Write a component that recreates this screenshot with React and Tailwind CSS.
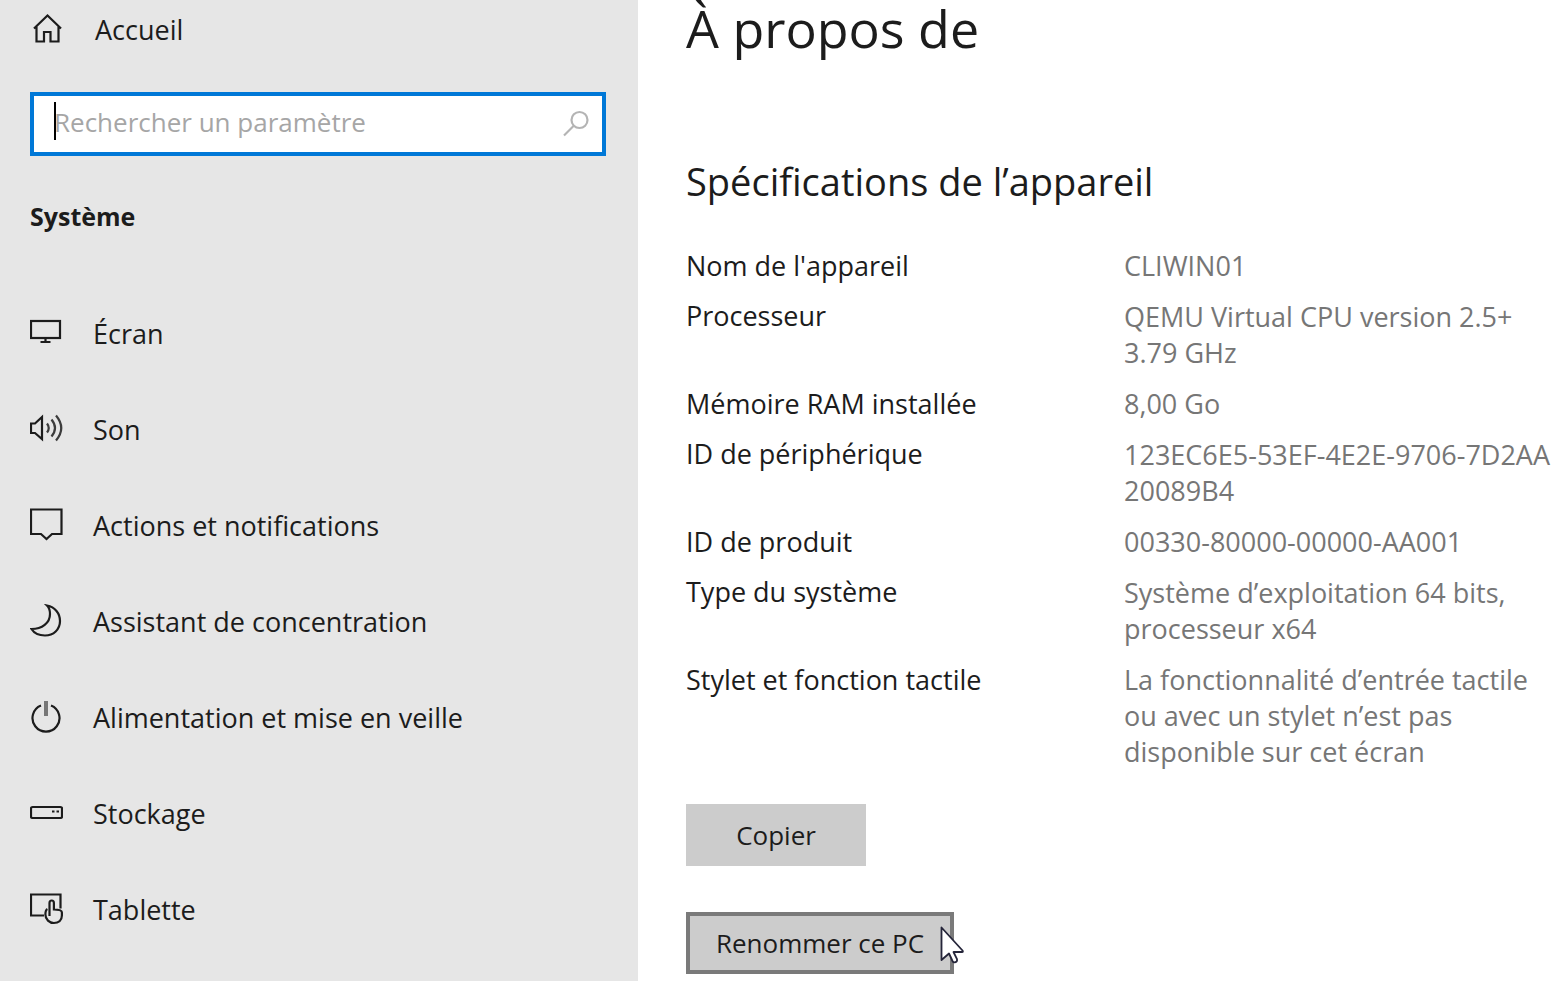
const navItems = [
  {
    label: 'Écran',
    icon: (
      <>
        <rect x="1" y="5" width="29" height="17" />
        <path d="M15.500 22v3M10.500 26h10" />
      </>
    ),
  },
  {
    label: 'Son',
    icon: (
      <>
        <path d="M1 11.500h4L12 5v22L5 21H1z" />
        <path d="M17 11.500q3.500 4.500 0 9M21.500 7.500q7 8.500 0 17M26 3.500q10.500 12.500 0 25" stroke="#3c3c3c" />
      </>
    ),
  },
  {
    label: 'Actions et notifications',
    icon: <path d="M1 1.500h30.500v24.500h-9.500l-5.500 5-5.500-5H1z" />,
  },
  {
    label: 'Assistant de concentration',
    icon: <path d="M17 1.500C25 3 30 9.500 30 17c0 8.500-6.500 14.500-15 14.500-6 0-11-2.500-13.500-6.500C12 25 20 19 20 10c0-3.500-1-6.500-3-8.500z" />,
  },
  {
    label: 'Alimentation et mise en veille',
    icon: (
      <>
        <path d="M11 5.500A13.500 13.500 0 1 0 21 5.500" />
        <path d="M16 1v15" stroke="#777777" strokeWidth="4" />
      </>
    ),
  },
  {
    label: 'Stockage',
    icon: (
      <>
        <rect x="1" y="11" width="31" height="11" rx="1.500" />
        <path d="M22 15.500h2.500M26.500 15.500h2.500" />
      </>
    ),
  },
  {
    label: 'Tablette',
    icon: (
      <>
        <path d="M14 23.500H1V2.500h29.500v14" />
        <path d="M19.500 24V11q0-2.500 2.200-2.500t2.200 2.500v6.500q8 0 8 3v3c0 5-3.500 7.500-8 7.500s-8.500-3.500-8.500-8.500q0-4.500 2-5.500" />
      </>
    ),
  },
];

const specs = [
  { name: "Nom de l'appareil", lines: ['CLIWIN01'] },
  { name: 'Processeur', lines: ['QEMU Virtual CPU version 2.5+', '3.79 GHz'] },
  { name: 'Mémoire RAM installée', lines: ['8,00 Go'] },
  { name: 'ID de périphérique', lines: ['123EC6E5-53EF-4E2E-9706-7D2AA', '20089B4'] },
  { name: 'ID de produit', lines: ['00330-80000-00000-AA001'] },
  { name: 'Type du système', lines: ['Système d’exploitation 64 bits,', 'processeur x64'] },
  {
    name: 'Stylet et fonction tactile',
    lines: ['La fonctionnalité d’entrée tactile', 'ou avec un stylet n’est pas', 'disponible sur cet écran'],
  },
];

function Icon({ children }) {
  return (
    <svg
      aria-hidden="true"
      viewBox="0 0 33 34"
      fill="none"
      stroke="#1c1c1c"
      strokeWidth="2.200"
      className="h-[34px] w-[33px] shrink-0"
    >
      {children}
    </svg>
  );
}

function Sidebar() {
  return (
    <aside className="w-[638px] shrink-0 bg-[#e6e6e6] pr-8 pl-[30px]">
      <a href="#accueil" className="flex h-[60px] items-center gap-8">
        <Icon>
          <path d="M4 15.500L17.500 2.500 31 15.500M6.500 13.500V28.500h7.500v-9.500h6.500v9.500h8V13.500" />
        </Icon>
        Accueil
      </a>
      <div className="relative mt-8">
        <input
          type="text"
          aria-label="Rechercher un paramètre"
          placeholder="Rechercher un paramètre"
          className="block h-16 w-full border-4 border-[#0078d7] bg-white pr-16 pb-1 pl-5 text-[26px] outline-none placeholder:text-[#a6a6a6]"
        />
        <span className="absolute top-[10px] left-6 h-[38px] w-[2px] bg-black" />
        <svg
          aria-hidden="true"
          viewBox="0 0 28 28"
          fill="none"
          stroke="#b4b4b4"
          strokeWidth="2.200"
          className="absolute top-[18px] right-4 size-7"
        >
          <circle cx="17.500" cy="10" r="8" />
          <path d="M11.500 16L2 25.500" />
        </svg>
      </div>
      <h2 className="mt-[42px] mb-[52px] text-[25px] leading-9 font-bold">Système</h2>
      <nav>
        {navItems.map((item) => (
          <a key={item.label} href="#systeme" className="flex h-24 items-center gap-[30px]">
            <span className="mb-[2px] flex">
              <Icon>{item.icon}</Icon>
            </span>
            {item.label}
          </a>
        ))}
      </nav>
    </aside>
  );
}

export default function App() {
  return (
    <div className="flex min-h-screen bg-white font-['Open_Sans','Noto_Sans',sans-serif] text-[27px] leading-9 text-[#1c1c1c]">
      <Sidebar />
      <main className="min-w-0 flex-1 pl-12">
        <h1 className="text-[52px] leading-[56px]">À propos de</h1>
        <h2 className="mt-[100px] text-[38px] leading-[50px]">Spécifications de l’appareil</h2>
        <dl className="mt-[41px] flex flex-col gap-3">
          {specs.map((spec) => (
            <div key={spec.name} className="grid grid-cols-[438px_minmax(0,1fr)]">
              <dt className="leading-[38px]">{spec.name}</dt>
              <dd className={spec.lines.length === 2 ? 'py-[2px] text-[#767676]' : 'py-px text-[#767676]'}>
                {spec.lines.map((line) => (
                  <span key={line} className="block whitespace-nowrap">
                    {line}
                  </span>
                ))}
              </dd>
            </div>
          ))}
        </dl>
        <div className="mt-[33px] flex flex-col items-start gap-[46px] text-[26px]">
          <button type="button" className="h-[62px] w-[180px] bg-[#cccccc]">
            Copier
          </button>
          <div className="relative">
            <button type="button" className="h-[62px] w-[268px] border-4 border-[#7a7a7a] bg-[#cccccc]">
              Renommer ce PC
            </button>
            <svg
              aria-hidden="true"
              viewBox="0 0 26 40"
              fill="white"
              stroke="#25253a"
              strokeWidth="1.800"
              strokeLinejoin="round"
              className="absolute top-[13px] left-[253px] h-10 w-[26px]"
            >
              <path d="M2.500 2.500v32.500l7.500-6.500 3.500 7.500q1 2 3 1.200t1.500-3l-3.500-7.200h8.500q1.500 0 .5-1.500z" />
            </svg>
          </div>
        </div>
      </main>
    </div>
  );
}
